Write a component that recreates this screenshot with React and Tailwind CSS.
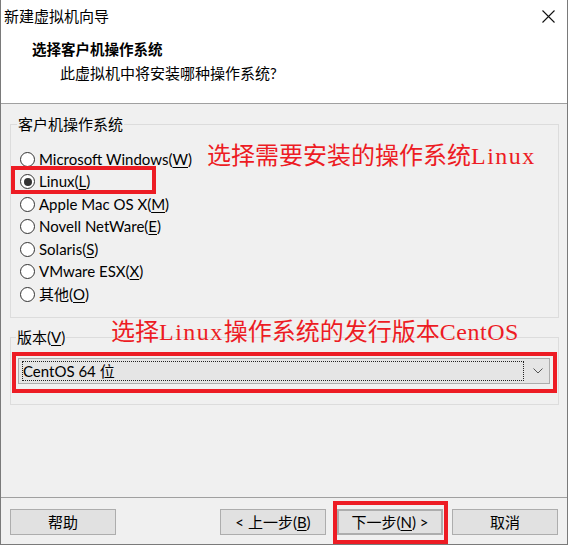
import React from "react";

const ui = { fontFamily: '"Lato", "Noto Sans CJK SC", sans-serif' };
const note = { fontFamily: '"Liberation Serif", "Noto Sans CJK SC", serif' };

const options = [
  ["Microsoft Windows", "W"],
  ["Linux", "L"],
  ["Apple Mac OS X", "M"],
  ["Novell NetWare", "E"],
  ["Solaris", "S"],
  ["VMware ESX", "X"],
  ["其他", "O"],
];

const Radio = ({ checked }) => (
  <span className="w-[15px] h-[15px] rounded-full border border-[#333] bg-white flex items-center justify-center shrink-0">
    {checked && <span className="w-[8px] h-[8px] rounded-full bg-[#333]" />}
  </span>
);

const Btn = ({ children, className = "" }) => (
  <button className={`h-[26px] w-[106px] bg-[#e1e1e1] border border-[#adadad] text-[15px] text-black flex items-center justify-center leading-none ${className}`}>
    {children}
  </button>
);

export default function App() {
  return (
    <div className="w-[570px] h-[546px] bg-white text-black" style={ui}>
      <div className="relative w-[568px] h-[545px] border-l border-r border-b border-[#7a7a7a] flex flex-col">
        {/* title bar */}
        <div className="h-[32px] bg-white flex items-center justify-between pl-[3px] pr-[12px]">
          <span className="text-[15px] leading-none">新建虚拟机向导</span>
          <svg width="13" height="13" viewBox="0 0 13 13" stroke="#111" strokeWidth="1.1">
            <path d="M0.5 0.5 L12.5 12.5 M12.5 0.5 L0.5 12.5" />
          </svg>
        </div>

        {/* header */}
        <div className="h-[72px] bg-white border-b border-[#a0a0a0] pl-[31px] pt-[9px]">
          <div className="text-[14.5px] font-bold leading-[18px]">选择客户机操作系统</div>
          <div className="text-[15px] leading-[18px] mt-[5px] pl-[28px]">此虚拟机中将安装哪种操作系统?</div>
        </div>

        {/* body */}
        <div className="h-[393px] bg-[#f0f0f0] pl-[9px] pr-[9px]">
          <fieldset className="mt-[12px] h-[202px] border border-[#dcdcdc] w-[549px]">
            <legend className="ml-[6px] px-[1px] text-[15px] leading-[17px]">客户机操作系统</legend>
            <div className="pt-[15px] pl-[9px] flex flex-col">
              {options.map(([label, key], i) => (
                <div key={key} className="h-[22.5px] flex items-center gap-[4px] text-[15px]">
                  <Radio checked={i === 1} />
                  <span className="leading-none">
                    {label}(<span className="underline underline-offset-2">{key}</span>)
                  </span>
                </div>
              ))}
            </div>
          </fieldset>

          <fieldset className="mt-[11px] h-[76px] border border-[#dcdcdc] w-[549px]">
            <legend className="ml-[5px] px-[1px] text-[15px] leading-[17px]">
              版本(<span className="underline underline-offset-2">V</span>)
            </legend>
            <div className="pt-[12px] pl-[7px]">
              <div className="w-[532px] h-[26px] bg-[#e5e5e5] border border-[#acacac] flex items-center pl-[3px] pr-[6px]">
                <div className="flex-1 h-[20px] border border-dotted border-[#222] flex items-center text-[15px] leading-none">
                  CentOS 64 位
                </div>
                <svg className="ml-[9px]" width="10" height="6" viewBox="0 0 10 6" fill="none" stroke="#555" strokeWidth="1">
                  <path d="M0.5 0.5 L5 5 L9.5 0.5" />
                </svg>
              </div>
            </div>
          </fieldset>
        </div>

        {/* footer */}
        <div className="flex-1 bg-[#f0f0f0] border-t border-[#a0a0a0] pt-[11px] pl-[9px] flex items-start">
          <Btn>帮助</Btn>
          <Btn className="ml-[104px]">
            &lt; 上一步(<span className="underline underline-offset-2">B</span>)
          </Btn>
          <Btn className="ml-[11px] border-2 border-[#0078d7]">
            下一步(<span className="underline underline-offset-2">N</span>) &gt;
          </Btn>
          <Btn className="ml-[9px]">取消</Btn>
        </div>

        {/* annotations */}
        <div className="absolute left-[10px] top-[166px] w-[145px] h-[28px] border-4 border-[#ed1c24]" />
        <div className="absolute left-[206px] top-[142px] text-[24px] leading-[28px] text-[#ed1c24]" style={note}>
          选择需要安装的操作系统<span className="tracking-[1.5px]">Linux</span>
        </div>
        <div className="absolute left-[110px] top-[318px] text-[24px] leading-[28px] text-[#ed1c24]" style={note}>
          选择<span className="tracking-[1.5px]">Linux</span>操作系统的发行版本<span className="tracking-[0.5px]">CentOS</span>
        </div>
        <div className="absolute left-[11px] top-[352px] w-[545px] h-[41px] border-4 border-[#ed1c24]" />
        <div className="absolute left-[332px] top-[501px] w-[115px] h-[43px] border-4 border-[#ed1c24]" />
      </div>
    </div>
  );
}
